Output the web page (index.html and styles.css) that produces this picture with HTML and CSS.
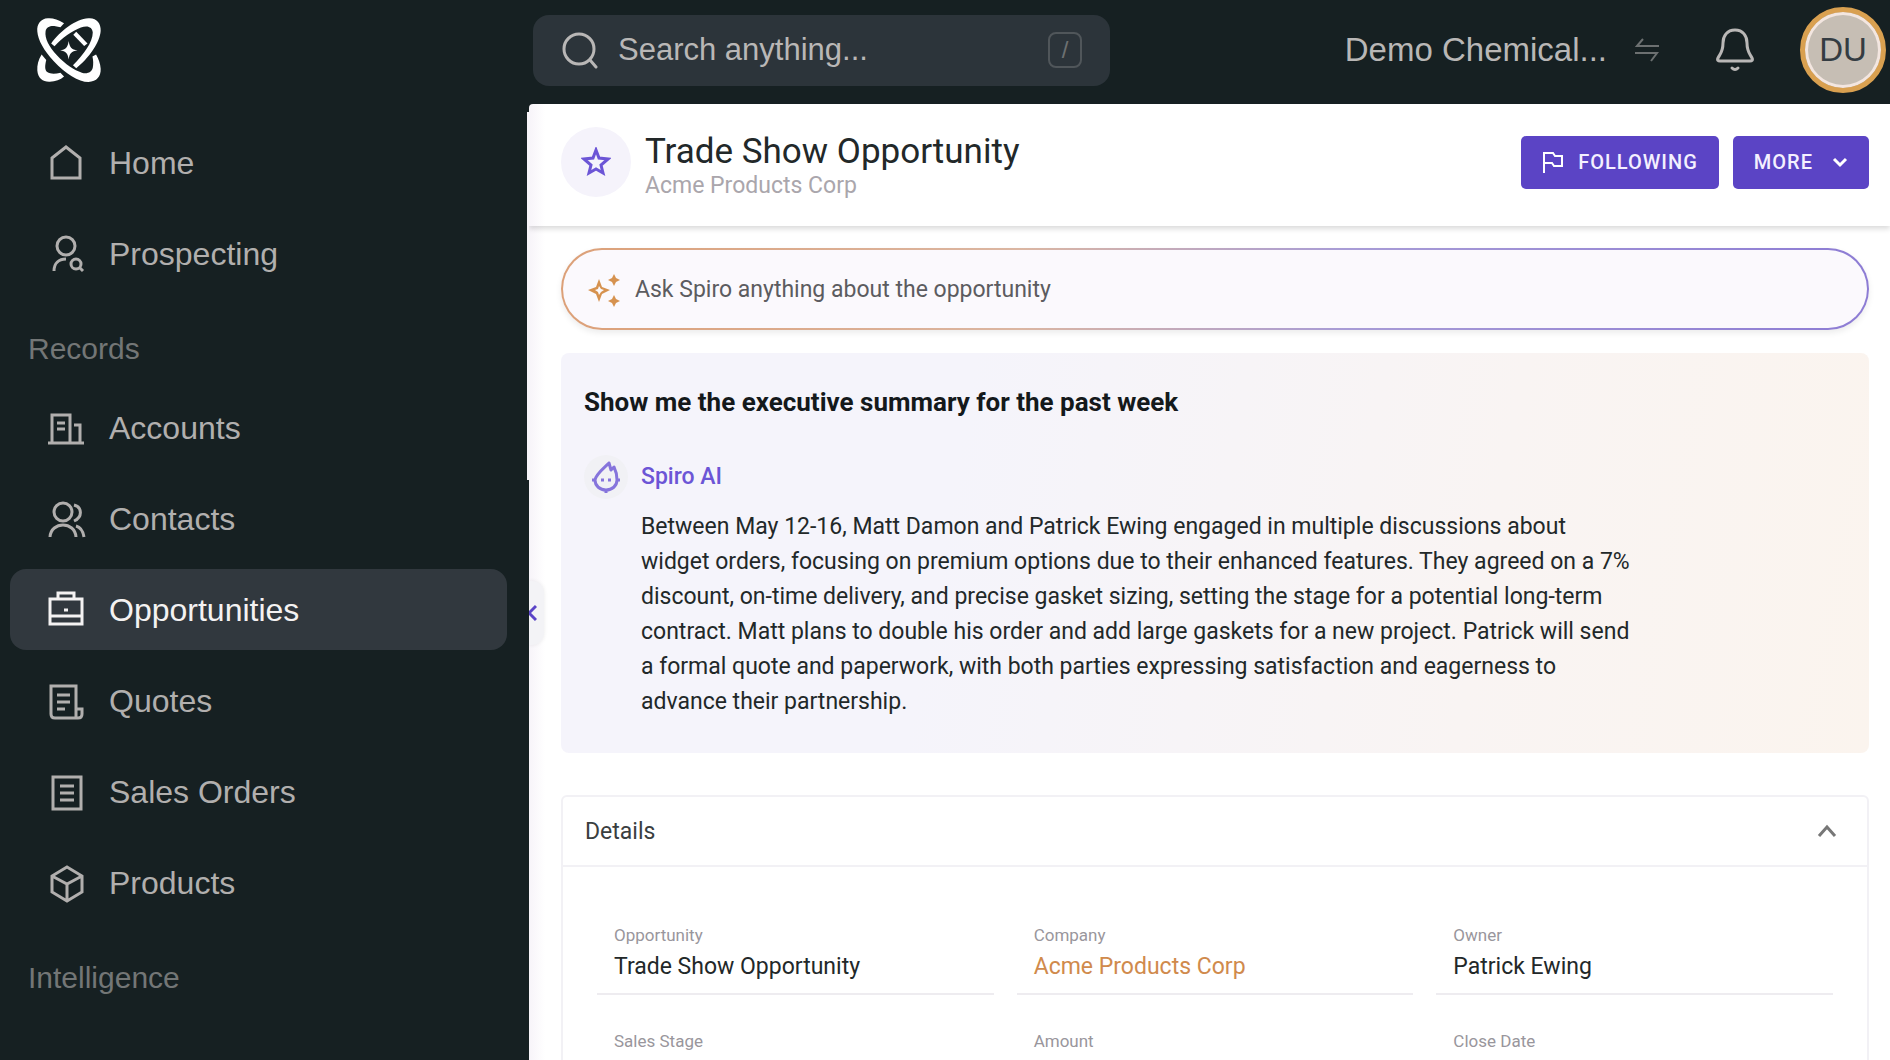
FILE: index.html
```html
<!DOCTYPE html>
<html lang="en">
<head>
    <meta charset="UTF-8">
    <meta name="viewport" content="width=device-width, initial-scale=1.0">
    <title>Trade Show Opportunity</title>
    <link rel="stylesheet" href="styles.css">
</head>
<body>
    <div class="app">
        <header class="topbar">
            <a href="#" class="logo" aria-label="Spiro">
                <svg viewBox="106 48 200 200" fill="#fff">
                    <path d="M191 67C172 55 157 51 142 52C120 53 108 70 110 92C112 118 130 150 160 182C195 220 235 245 265 245C290 244 303 228 302 205C301 190 296 176 288 162L277 168C280 180 280 192 278 202C275 215 262 222 245 217C222 210 195 192 170 165C145 138 132 112 135 92C137 78 150 74 165 76L180 79Z"/>
                    <path d="M152 128C180 90 225 55 265 52C290 50 303 68 302 90C300 125 265 175 228 203L218 194C250 162 278 125 278 95C277 78 262 72 242 80C215 90 185 112 162 137Z"/>
                    <path d="M123 162C113 178 109 195 110 210C112 235 128 245 148 244C165 243 180 238 191 228L180 217C165 221 150 222 140 215C132 208 133 195 137 178Z"/>
                    <path d="M228 93L262 128L252 136L219 102Z"/>
                    <path d="M205 121C208 140 213 147 232 149C213 152 208 158 205 177C202 158 197 152 179 149C197 147 202 140 205 121Z"/>
                </svg>
            </a>
            <label class="search">
                <svg width="38" height="38" viewBox="0 0 38 38" fill="none" stroke="currentColor" stroke-width="3" stroke-linecap="round">
                    <circle cx="18" cy="18" r="15"/>
                    <path d="M29 29l6 7"/>
                </svg>
                <input type="text" placeholder="Search anything..." aria-label="Search anything">
                <kbd>/</kbd>
            </label>
            <button class="company">
                Demo Chemical...
                <svg width="24" height="24" viewBox="0 0 24 24" fill="none" stroke="#6c7071" stroke-width="2">
                    <path d="M8 1L2 8h22M0 15h22l-6 8"/>
                </svg>
            </button>
            <button class="bell" aria-label="Notifications">
                <svg width="38" height="44" viewBox="0 0 38 44" fill="none" stroke="currentColor" stroke-width="3" stroke-linecap="round" stroke-linejoin="round">
                    <path d="M19 2C11 2 7 8 7 15C7 24 4 26 2 30C1 32 2 33 4 33H34C36 33 37 32 36 30C34 26 31 24 31 15C31 8 27 2 19 2Z"/>
                    <path d="M16 40Q19 43 22 40"/>
                </svg>
            </button>
            <button class="avatar">DU</button>
        </header>

        <nav class="sidebar">
            <ul>
                <li><a href="#">
                    <svg viewBox="0 0 38 38"><path d="M5 13L19 2L33 13V33H5Z"/></svg>
                    Home
                </a></li>
                <li><a href="#">
                    <svg viewBox="0 0 38 38"><circle cx="19" cy="10" r="9"/><path d="M7 35C7 27 12 23 19 23"/><circle cx="29" cy="28" r="5"/><path d="M32 31l4 4"/></svg>
                    Prospecting
                </a></li>
            </ul>
            <h2>Records</h2>
            <ul>
                <li><a href="#">
                    <svg viewBox="0 0 38 38"><path d="M1 33H37M5 33V5H23V33M10 13H18M10 19H18M27 15H33V33"/></svg>
                    Accounts
                </a></li>
                <li><a href="#">
                    <svg viewBox="0 0 38 38"><circle cx="16" cy="11" r="9"/><path d="M3 36C4 20 28 20 29 36M27 4C35 6 36 16 27 20M29 25C33 26 36 30 37 36"/></svg>
                    Contacts
                </a></li>
                <li><a href="#" class="active">
                    <svg viewBox="0 0 38 38"><path d="M3 7H35V32H3ZM11 7V1H27V7M3 24H35"/><path d="M17 18H21"/></svg>
                    Opportunities
                </a></li>
                <li><a href="#">
                    <svg viewBox="0 0 38 38"><path d="M29 35V3H4V31Q4 35 8 35H31Q35 35 35 31V26H29M10 12H23M10 19H23M10 26H18"/></svg>
                    Quotes
                </a></li>
                <li><a href="#">
                    <svg viewBox="0 0 38 38"><path d="M6 3H34V35H6ZM13 12H27M13 19H27M13 26H27"/></svg>
                    Sales Orders
                </a></li>
                <li><a href="#">
                    <svg viewBox="0 0 38 38"><path d="M20 2L35 11V27L20 36L5 27V11ZM5 11L20 19L35 11M20 19V36"/></svg>
                    Products
                </a></li>
            </ul>
            <h2>Intelligence</h2>
        </nav>

        <main class="main">
            <button class="collapse" aria-label="Collapse sidebar">
                <svg width="8" height="18" viewBox="0 0 8 18" fill="none" stroke="#5b44c7" stroke-width="3"><path d="M7 2L0 9L7 16"/></svg>
            </button>

            <div class="record-header">
                <button class="star" aria-label="Favorite">
                    <svg width="30" height="30" viewBox="0 0 30 30" fill="none" stroke="#6c55d6" stroke-width="3"><path d="M15 3L18 11L27 12L20 18L22 26L15 22L8 26L10 18L3 12L12 11Z"/></svg>
                </button>
                <div class="record-title">
                    <h1>Trade Show Opportunity</h1>
                    <p>Acme Products Corp</p>
                </div>
                <button class="btn">
                    <svg width="22" height="24" viewBox="0 0 22 24" fill="none" stroke="#fff" stroke-width="2"><path d="M2 23V3H11L13 6H20V16H12L10 13H2"/></svg>
                    FOLLOWING
                </button>
                <button class="btn btn-more">
                    MORE
                    <svg width="16" height="12" viewBox="0 0 16 12" fill="none" stroke="#fff" stroke-width="3"><path d="M2 3L8 9L14 3"/></svg>
                </button>
            </div>

            <div class="content">
                <label class="ask">
                    <svg width="34" height="34" viewBox="0 0 34 34" fill="#d6924f">
                        <path fill-rule="evenodd" d="M12 6L15 14L23 17L15 21L12 29L9 21L1 17L9 14ZM12 13L11 16L8 17L11 19L12 22L14 19L17 17L14 16Z"/>
                        <path d="M27 1L29 5L33 7L29 9L27 13L25 9L21 7L25 5ZM27 22L29 26L33 28L29 30L27 34L25 30L21 28L25 26Z"/>
                    </svg>
                    <input type="text" placeholder="Ask Spiro anything about the opportunity" aria-label="Ask Spiro">
                </label>

                <section class="summary">
                    <h2>Show me the executive summary for the past week</h2>
                    <div class="answer">
                        <span class="bot">
                            <svg width="30" height="36" viewBox="0 0 30 36" fill="none" stroke="#8674dc" stroke-width="3" stroke-linejoin="round">
                                <path d="M18 4C13 9 5 15 4 21C4 27 9 31 15 31C21 31 26 27 26 21C26 16 25 12 23 8L20 11L18 4Z"/>
                                <path d="M1 21H4M26 21H29M10 21H13M17 21H20M15 31V34"/>
                            </svg>
                        </span>
                        <div class="answer-text">
                            <h3>Spiro AI</h3>
                            <p>
                                Between May 12-16, Matt Damon and Patrick Ewing engaged in multiple discussions about<br>
                                widget orders, focusing on premium options due to their enhanced features. They agreed on a 7%<br>
                                discount, on-time delivery, and precise gasket sizing, setting the stage for a potential long-term<br>
                                contract. Matt plans to double his order and add large gaskets for a new project. Patrick will send<br>
                                a formal quote and paperwork, with both parties expressing satisfaction and eagerness to<br>
                                advance their partnership.
                            </p>
                        </div>
                    </div>
                </section>

                <section class="details">
                    <button class="details-toggle" aria-expanded="true">
                        Details
                        <svg width="20" height="14" viewBox="0 0 20 14" fill="none" stroke="#777" stroke-width="3"><path d="M2 12L10 3L18 12"/></svg>
                    </button>
                    <dl class="fields">
                        <div class="field"><dt>Opportunity</dt><dd>Trade Show Opportunity</dd></div>
                        <div class="field"><dt>Company</dt><dd><a href="#">Acme Products Corp</a></dd></div>
                        <div class="field"><dt>Owner</dt><dd>Patrick Ewing</dd></div>
                        <div class="field"><dt>Sales Stage</dt><dd></dd></div>
                        <div class="field"><dt>Amount</dt><dd></dd></div>
                        <div class="field"><dt>Close Date</dt><dd></dd></div>
                    </dl>
                </section>
            </div>
        </main>
    </div>
</body>
</html>
```
FILE: styles.css
```css
* {
    box-sizing: border-box;
}
body {
    margin: 0;
    font-family: Roboto, sans-serif;
    background: #162022;
    color: #222829;
}
h1, h2, h3, p, ul, dl, dd {
    margin: 0;
    padding: 0;
}
button, input {
    font: inherit;
    color: inherit;
    border: none;
    background: none;
    padding: 0;
    cursor: pointer;
}
input {
    flex: 1;
    min-width: 0;
    outline: none;
    cursor: text;
}
a {
    color: inherit;
    text-decoration: none;
}
svg {
    display: block;
    flex-shrink: 0;
}
.app {
    display: grid;
    grid-template-columns: 529px 1fr;
    grid-template-rows: 104px 1fr;
    height: 100vh;
    overflow: hidden;
}

/* top bar */
.topbar {
    grid-column: 1 / -1;
    display: flex;
    align-items: center;
    padding: 0 4px 4px 36px;
    font-family: "Liberation Sans", Arial, sans-serif;
    color: #b9b7b6;
}
.logo {
    width: 497px;
}
.logo svg {
    width: 66px;
    height: 66px;
}
.search {
    display: flex;
    align-items: center;
    gap: 19px;
    width: 577px;
    height: 71px;
    margin-right: auto;
    padding: 0 28px;
    border-radius: 16px;
    background: #2c343a;
    font-size: 31px;
}
.search input::placeholder {
    color: #b9b7b6;
    opacity: 1;
}
.search kbd {
    width: 34px;
    height: 36px;
    border: 2px solid #50565a;
    border-radius: 8px;
    font-family: inherit;
    font-size: 24px;
    line-height: 32px;
    text-align: center;
    color: #6c7071;
}
.company {
    display: flex;
    align-items: center;
    gap: 28px;
    font-size: 33px;
}
.bell {
    margin: 0 46px 0 57px;
}
.avatar {
    width: 86px;
    height: 86px;
    border: 5px solid #d9a050;
    border-radius: 50%;
    background: #c6beb4;
    box-shadow: inset 0 0 0 3px #f3e6e0;
    font-size: 33px;
    color: #343c42;
}

/* sidebar */
.sidebar {
    position: relative;
    padding: 18px 22px 0 10px;
    font-family: "Liberation Sans", Arial, sans-serif;
    font-size: 32px;
    color: #b1afae;
}
.sidebar::after {
    content: "";
    position: absolute;
    top: 8px;
    right: 0;
    width: 2px;
    height: 368px;
    background: #f7f4f9;
}
.sidebar ul {
    display: flex;
    flex-direction: column;
    gap: 10px;
    list-style: none;
}
.sidebar a {
    display: flex;
    align-items: center;
    gap: 24px;
    height: 81px;
    padding: 2px 0 0 37px;
    border-radius: 16px;
}
.sidebar a.active {
    background: #31383e;
    color: #f4f2f2;
}
.sidebar svg {
    width: 38px;
    height: 38px;
    fill: none;
    stroke: currentColor;
    stroke-width: 3;
    overflow: visible;
}
.sidebar h2 {
    padding: 36px 18px 20px;
    font-size: 30px;
    font-weight: 400;
    line-height: 37px;
    color: #737676;
}

/* main area */
.main {
    position: relative;
    border-top-left-radius: 4px;
    background: linear-gradient(90deg, #f7f4f9, #fff 16px);
    overflow: hidden;
}
.collapse {
    position: absolute;
    top: 477px;
    left: 0;
    width: 15px;
    height: 64px;
    border-radius: 0 12px 12px 0;
    background: #f3f3f6;
    box-shadow: 0 0 4px rgba(0, 0, 0, 0.08);
}
.record-header {
    display: flex;
    align-items: center;
    gap: 14px;
    height: 122px;
    padding: 0 21px 6px 32px;
    box-shadow: 0 3px 5px rgba(0, 0, 0, 0.14);
}
.star {
    display: flex;
    align-items: center;
    justify-content: center;
    width: 70px;
    height: 70px;
    border-radius: 50%;
    background: #f5f3fb;
}
.record-title {
    flex: 1;
    padding-top: 7px;
}
.record-title h1 {
    font-size: 35px;
    font-weight: 400;
    line-height: 40px;
}
.record-title p {
    font-size: 23px;
    line-height: 28px;
    color: #aaa6ac;
}
.btn {
    display: flex;
    align-items: center;
    gap: 14px;
    height: 53px;
    padding: 0 21px;
    border-radius: 5px;
    background: #5b44c5;
    color: #f4f0ff;
    font-size: 20px;
    font-weight: 500;
    letter-spacing: 1px;
}
.btn-more {
    gap: 19px;
}
.content {
    padding: 22px 21px 0 32px;
}
.ask {
    display: flex;
    align-items: center;
    gap: 14px;
    height: 82px;
    padding: 1px 24px 0;
    border: 2px solid transparent;
    border-radius: 41px;
    background: linear-gradient(#fbf9fd, #fbf9fd) padding-box, linear-gradient(90deg, #dca078, #dbb6a2 35%, #a89cd6 60%, #8d7cd4) border-box;
    box-shadow: 0 3px 6px rgba(0, 0, 0, 0.08);
    font-size: 23px;
}
.ask input::placeholder {
    color: #5c5c60;
    opacity: 1;
}
.summary {
    margin-top: 23px;
    padding: 32px 23px 34px;
    border-radius: 8px;
    background: linear-gradient(100deg, #f5f4fb 30%, #f9f4f3 70%, #fbf4ee);
}
.summary h2 {
    font-size: 26px;
    font-weight: 700;
    line-height: 35px;
    color: #14191b;
}
.answer {
    display: flex;
    gap: 13px;
    margin-top: 35px;
}
.bot {
    display: flex;
    align-items: center;
    justify-content: center;
    width: 44px;
    height: 44px;
    border-radius: 50%;
    background: #f1f1f5;
}
.answer-text h3 {
    font-size: 23px;
    font-weight: 500;
    line-height: 44px;
    color: #6c55d6;
}
.answer-text p {
    margin-top: 10px;
    font-size: 23px;
    line-height: 35px;
    white-space: nowrap;
}
.details {
    margin-top: 42px;
    border: 2px solid #f2f1f5;
    border-radius: 6px;
}
.details-toggle {
    display: flex;
    align-items: center;
    justify-content: space-between;
    width: 100%;
    height: 70px;
    padding: 0 30px 0 22px;
    border-bottom: 2px solid #f2f1f5;
    font-size: 23px;
    color: #3a3e40;
}
.fields {
    display: grid;
    grid-template-columns: repeat(3, 1fr);
    gap: 34px 23px;
    padding: 56px 34px;
}
.field {
    padding: 0 17px 6px;
    border-bottom: 2px solid #eeecf0;
}
.field dt {
    font-size: 17px;
    line-height: 24px;
    color: #99969c;
}
.field dd {
    min-height: 40px;
    font-size: 23px;
    line-height: 40px;
}
.field a {
    color: #d08a4c;
}
```
